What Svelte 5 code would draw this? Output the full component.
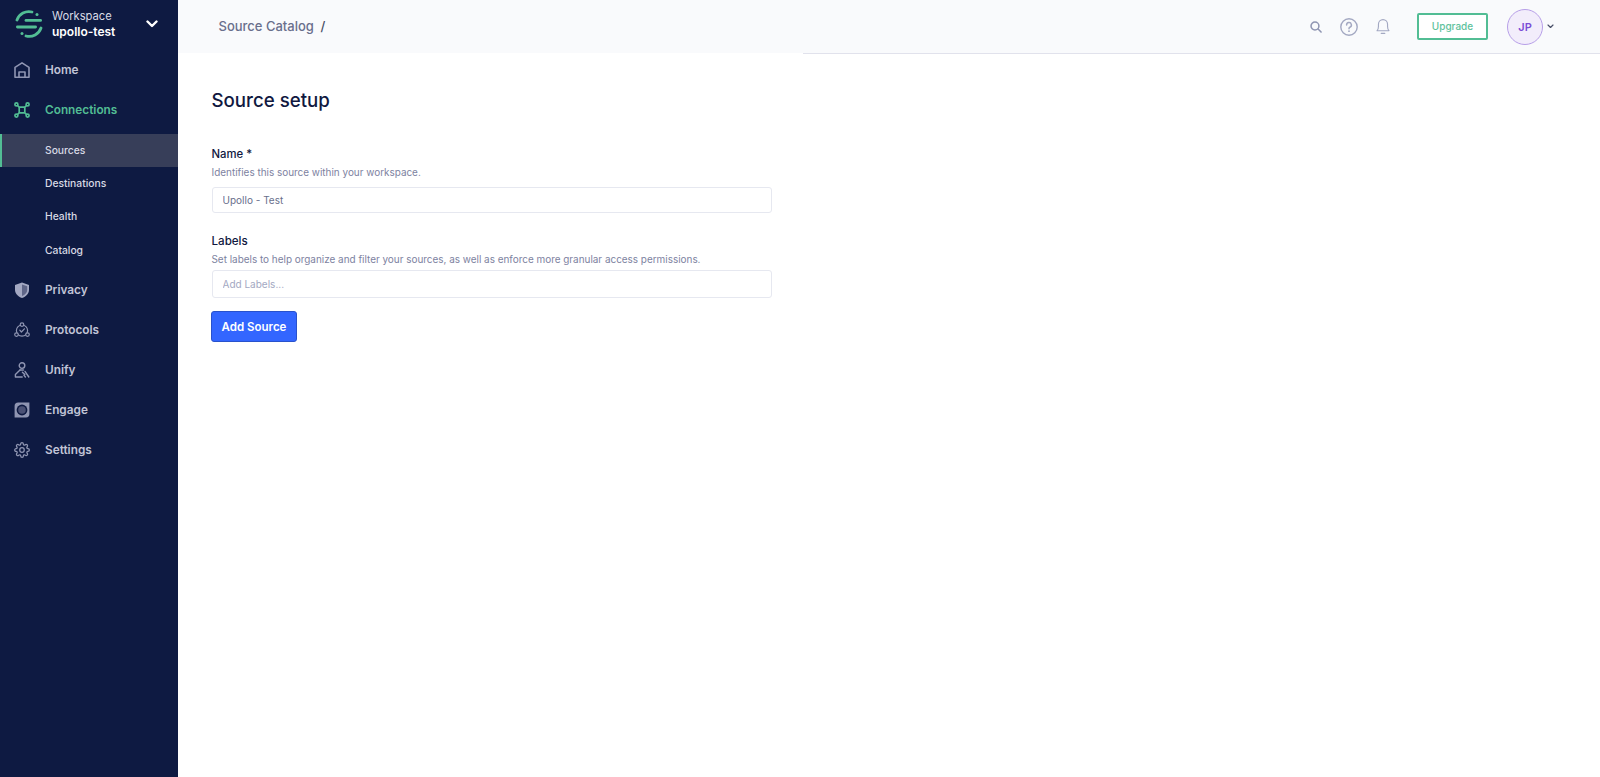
<script lang="ts">
    const subItems = ['Sources', 'Destinations', 'Health', 'Catalog'];
    let sourceName = 'Upollo - Test';
</script>

<div class="page">
    <!-- Sidebar -->
    <aside class="sidebar">
        <div class="workspace">
            <svg class="logo" viewBox="0 0 28 28" width="28" height="28" fill="none" stroke="#52bd94" stroke-width="2.8" stroke-linecap="round">
                <path d="M2 10 A12.4 12.4 0 0 1 17 2" />
                <circle cx="22" cy="4.4" r="1.5" fill="#52bd94" stroke="none" />
                <path d="M11 10.4 H25.6" />
                <path d="M2.4 17 H20.6" />
                <path d="M26 18 A12.4 12.4 0 0 1 11 26" />
                <circle cx="7" cy="23.4" r="1.5" fill="#52bd94" stroke="none" />
            </svg>
            <div class="workspace-text">
                <div class="workspace-label">Workspace</div>
                <div class="workspace-name">upollo-test</div>
            </div>
            <svg class="workspace-caret" viewBox="0 0 12 8" width="12" height="8" fill="none" stroke="#fff" stroke-width="2.4" stroke-linecap="round" stroke-linejoin="round">
                <path d="M1.5 1.5 L6 6 L10.5 1.5" />
            </svg>
        </div>

        <nav class="nav">
            <div class="nav-item">
                <svg class="nav-icon" viewBox="0 0 16 16" fill="none" stroke="#8f95b2" stroke-width="1.6" stroke-linejoin="round">
                    <path d="M1 15.2 V5.4 L8 0.9 L15 5.4 V15.2 Z" />
                    <path d="M5 15.2 V10 H11 V15.2" />
                </svg>
                <span>Home</span>
            </div>

            <div class="nav-item active">
                <svg class="nav-icon" viewBox="0 0 16 16" fill="none" stroke="#52bd94" stroke-width="1.7">
                    <rect x="5.2" y="5.2" width="5.6" height="5.6" rx="1" />
                    <path d="M5.4 5.4 L3 3 M10.6 5.4 L13 3 M5.4 10.6 L3 13 M10.6 10.6 L13 13" />
                    <circle cx="2.4" cy="2.4" r="1.5" />
                    <circle cx="13.6" cy="2.4" r="1.5" />
                    <circle cx="2.4" cy="13.6" r="1.5" />
                    <circle cx="13.6" cy="13.6" r="1.5" />
                </svg>
                <span>Connections</span>
            </div>

            <div class="sub-list">
                {#each subItems as item, i}
                    <div class="sub-item" class:selected={i === 0}>{item}</div>
                {/each}
            </div>

            <div class="nav-item">
                <svg class="nav-icon" viewBox="0 0 16 16">
                    <path d="M8 0.4 L15 3 V8 C15 11.6 12 14.6 8 16 C4 14.6 1 11.6 1 8 V3 Z" fill="#a3a8c2" />
                    <path d="M8 2.4 L13.2 4.3 V8 C13.2 10.7 11 12.9 8 14.1 Z" fill="#5f6688" />
                </svg>
                <span>Privacy</span>
            </div>

            <div class="nav-item">
                <svg class="nav-icon" viewBox="0 0 16 16" fill="none" stroke="#8f95b2" stroke-width="1.2" stroke-linejoin="round" stroke-linecap="round">
                    <circle cx="8" cy="8.6" r="5.6" />
                    <circle cx="8" cy="2.6" r="1.8" fill="#0e1a42" />
                    <circle cx="2.5" cy="12.6" r="1.8" fill="#0e1a42" />
                    <circle cx="13.5" cy="12.6" r="1.8" fill="#0e1a42" />
                    <path d="M5.8 8.2 L7.4 10 L10.4 6.8" />
                </svg>
                <span>Protocols</span>
            </div>

            <div class="nav-item">
                <svg class="nav-icon" viewBox="0 0 16 16" fill="none" stroke="#8f95b2" stroke-width="1.4" stroke-linecap="round" stroke-linejoin="round">
                    <circle cx="8" cy="3.6" r="2.8" />
                    <path d="M6 8 L1.4 12.6 V15 H8.2" />
                    <path d="M6 8 H9.4" />
                    <path d="M8.4 10.2 L10.8 12.6 M11 9.4 L14.8 15 M10 13.4 L11.4 15" />
                </svg>
                <span>Unify</span>
            </div>

            <div class="nav-item">
                <svg class="nav-icon" viewBox="0 0 16 16">
                    <path d="M15.4 0.4 V12 A3.4 3.4 0 0 1 12 15.4 H0.6 V4 A3.6 3.6 0 0 1 4.2 0.4 Z" fill="#8f95b2" />
                    <circle cx="8" cy="8" r="5.4" fill="#0e1a42" />
                    <circle cx="8" cy="8" r="3.8" fill="#4a5175" />
                </svg>
                <span>Engage</span>
            </div>

            <div class="nav-item">
                <svg class="nav-icon" viewBox="0 0 24 24" fill="none" stroke="#8f95b2" stroke-width="1.9" stroke-linecap="round" stroke-linejoin="round">
                    <circle cx="12" cy="12" r="3.4" />
                    <path d="M19.4 15a1.65 1.65 0 0 0 .33 1.82l.06.06a2 2 0 0 1 0 2.83 2 2 0 0 1-2.83 0l-.06-.06a1.65 1.65 0 0 0-1.82-.33 1.65 1.65 0 0 0-1 1.51V21a2 2 0 0 1-2 2 2 2 0 0 1-2-2v-.09A1.65 1.65 0 0 0 9 19.4a1.65 1.65 0 0 0-1.82.33l-.06.06a2 2 0 0 1-2.83 0 2 2 0 0 1 0-2.83l.06-.06a1.65 1.65 0 0 0 .33-1.82 1.65 1.65 0 0 0-1.51-1H3a2 2 0 0 1-2-2 2 2 0 0 1 2-2h.09A1.65 1.65 0 0 0 4.6 9a1.65 1.65 0 0 0-.33-1.82l-.06-.06a2 2 0 0 1 0-2.83 2 2 0 0 1 2.83 0l.06.06a1.65 1.65 0 0 0 1.82.33H9a1.65 1.65 0 0 0 1-1.51V3a2 2 0 0 1 2-2 2 2 0 0 1 2 2v.09a1.65 1.65 0 0 0 1 1.51 1.65 1.65 0 0 0 1.82-.33l.06-.06a2 2 0 0 1 2.83 0 2 2 0 0 1 0 2.83l-.06.06a1.65 1.65 0 0 0-.33 1.82V9a1.65 1.65 0 0 0 1.51 1H21a2 2 0 0 1 2 2 2 2 0 0 1-2 2h-.09a1.65 1.65 0 0 0-1.51 1z" />
                </svg>
                <span>Settings</span>
            </div>
        </nav>
    </aside>

    <div class="main">
        <!-- Top bar -->
        <header class="topbar">
            <div class="crumbs">
                <span>Source Catalog</span>
                <span class="slash">/</span>
            </div>
            <div class="top-actions">
                <div class="top-icons">
                    <svg viewBox="0 0 14 14" width="12" height="12" fill="none" stroke="#8f95b2" stroke-width="1.8" stroke-linecap="round">
                        <circle cx="5.8" cy="5.8" r="4.6" />
                        <path d="M9.4 9.4 L12.9 12.9" />
                    </svg>
                    <svg viewBox="0 0 18 18" width="18" height="18" fill="none" stroke="#a3a8c2" stroke-width="1.4" stroke-linecap="round">
                        <circle cx="9" cy="9" r="8.2" />
                        <path d="M6.6 7 A2.4 2.4 0 1 1 9.9 9.2 C9.2 9.5 9 10 9 10.8" stroke-width="1.5" />
                        <circle cx="9" cy="13.2" r="0.9" fill="#a3a8c2" stroke="none" />
                    </svg>
                    <svg viewBox="0 0 16 18" width="14" height="17" fill="none" stroke="#a3a8c2" stroke-width="1.3" stroke-linecap="round" stroke-linejoin="round">
                        <path d="M1.2 13.8 C2.4 12.6 2.8 11.4 2.8 9 V6.4 A5.2 5.2 0 0 1 13.2 6.4 V9 C13.2 11.4 13.6 12.6 14.8 13.8 Z" />
                        <path d="M6 16.8 H10" stroke-width="1.5" />
                    </svg>
                </div>
                <button class="upgrade">Upgrade</button>
                <div class="account">
                    <div class="avatar">JP</div>
                    <svg viewBox="0 0 8 6" width="7" height="5" fill="none" stroke="#474d66" stroke-width="1.4" stroke-linecap="round" stroke-linejoin="round">
                        <path d="M1 1.2 L4 4.2 L7 1.2" />
                    </svg>
                </div>
            </div>
        </header>
        <div class="rule"></div>

        <!-- Form -->
        <main class="content">
            <h1>Source setup</h1>

            <div class="field name-field">
                <div class="label name-label">Name *</div>
                <div class="hint">Identifies this source within your workspace.</div>
                <input class="input name-input" type="text" bind:value={sourceName} />
            </div>

            <div class="field labels-field">
                <div class="label">Labels</div>
                <div class="hint">Set labels to help organize and filter your sources, as well as enforce more granular access permissions.</div>
                <input class="input labels-input" type="text" placeholder="Add Labels..." />
            </div>

            <button class="submit">Add Source</button>
        </main>
    </div>
</div>

<style>
    :global(body) {
        margin: 0;
        background: #fff;
        font-family: Inter, "Liberation Sans", sans-serif;
    }

    .page {
        display: flex;
        height: 777px;
        overflow: hidden;
    }

    /* Sidebar */
    .sidebar {
        width: 178px;
        flex-shrink: 0;
        background: #0e1a42;
    }

    .workspace {
        display: flex;
        align-items: center;
        height: 48px;
        padding: 0 0 2px 15px;
    }

    .logo {
        flex-shrink: 0;
    }

    .workspace-text {
        margin-left: 9px;
        width: 94px;
        font-size: 12px;
        line-height: 16px;
    }

    .workspace-label {
        color: #d8dae5;
        font-size: 11.2px;
    }

    .workspace-name {
        color: #fff;
        font-weight: 600;
    }

    .nav-item {
        display: flex;
        align-items: center;
        height: 40px;
        padding-left: 14px;
        color: #c1c4d6;
        font-size: 11.8px;
        font-weight: 600;
    }

    .nav-item span {
        margin-left: 15px;
    }

    .nav-item.active {
        color: #52bd94;
    }

    .nav-icon {
        width: 16px;
        height: 16px;
        flex-shrink: 0;
    }

    .sub-list {
        margin-top: 4px;
        padding-bottom: 3px;
    }

    .sub-item {
        display: flex;
        align-items: center;
        box-sizing: border-box;
        height: 33.3px;
        padding: 0 0 2px 45px;
        color: #d8dae5;
        font-size: 10.3px;
        font-weight: 500;
    }

    .sub-item.selected {
        background: #373e59;
        border-left: 2px solid #52bd94;
        padding-left: 43px;
    }

    /* Top bar */
    .main {
        flex: 1;
        min-width: 0;
    }

    .topbar {
        display: flex;
        justify-content: space-between;
        align-items: center;
        height: 53px;
        padding: 0 46px 0 40.5px;
        background: #f9fafc;
        box-sizing: border-box;
    }

    .crumbs {
        padding-bottom: 1px;
        color: #696f8c;
        font-size: 13px;
        font-weight: 500;
    }

    .slash {
        margin-left: 3px;
        color: #474d66;
    }

    .top-actions {
        display: flex;
        align-items: center;
    }

    .top-icons {
        display: flex;
        align-items: center;
        gap: 18px;
    }

    .upgrade {
        width: 71px;
        height: 27px;
        margin-left: 27px;
        padding: 0 0 1px;
        background: #fff;
        border: 2px solid #52bd94;
        border-radius: 2px;
        color: #5ec29c;
        font-family: inherit;
        font-size: 10px;
        font-weight: 500;
    }

    .account {
        display: flex;
        align-items: center;
        gap: 4px;
        margin-left: 19px;
    }

    .avatar {
        display: flex;
        align-items: center;
        justify-content: center;
        width: 36px;
        height: 36px;
        box-sizing: border-box;
        border: 1.5px solid #b79fe8;
        border-radius: 50%;
        background: #f2edfb;
        color: #7b4cd6;
        font-size: 11px;
        font-weight: 600;
    }

    .rule {
        height: 1px;
        margin-left: 625px;
        background: #e1e2ec;
    }

    /* Form */
    .content {
        padding: 0 33.5px;
    }

    h1 {
        margin: 34px 0 0;
        color: #101840;
        font-size: 18.7px;
        line-height: 26px;
        font-weight: 500;
    }

    .field {
        width: 560.5px;
    }

    .name-field {
        margin-top: 32px;
    }

    .labels-field {
        margin-top: 20px;
    }

    .label {
        color: #101840;
        font-size: 11.6px;
        line-height: 16px;
        font-weight: 500;
    }

    .name-label {
        font-size: 11.3px;
    }

    .hint {
        margin-top: 2px;
        color: #7d829f;
        font-size: 9.93px;
        line-height: 16px;
    }

    .input {
        display: block;
        width: 100%;
        box-sizing: border-box;
        margin-top: 7px;
        padding: 0 10px;
        background: #fff;
        border: 1px solid #e6e8f0;
        border-radius: 3px;
        color: #696f8c;
        font-family: inherit;
        font-size: 10px;
        outline: none;
    }

    .input::placeholder {
        color: #a3a8c2;
        opacity: 1;
    }

    .name-input {
        height: 26px;
    }

    .labels-input {
        height: 28px;
        margin-top: 3px;
    }

    .submit {
        display: block;
        width: 86px;
        height: 31px;
        margin: 13px 0 0 -0.5px;
        padding: 0;
        background: #3366ff;
        border: 1px solid #2952cc;
        border-radius: 3px;
        color: #fff;
        font-family: inherit;
        font-size: 11.5px;
        font-weight: 600;
    }
</style>
